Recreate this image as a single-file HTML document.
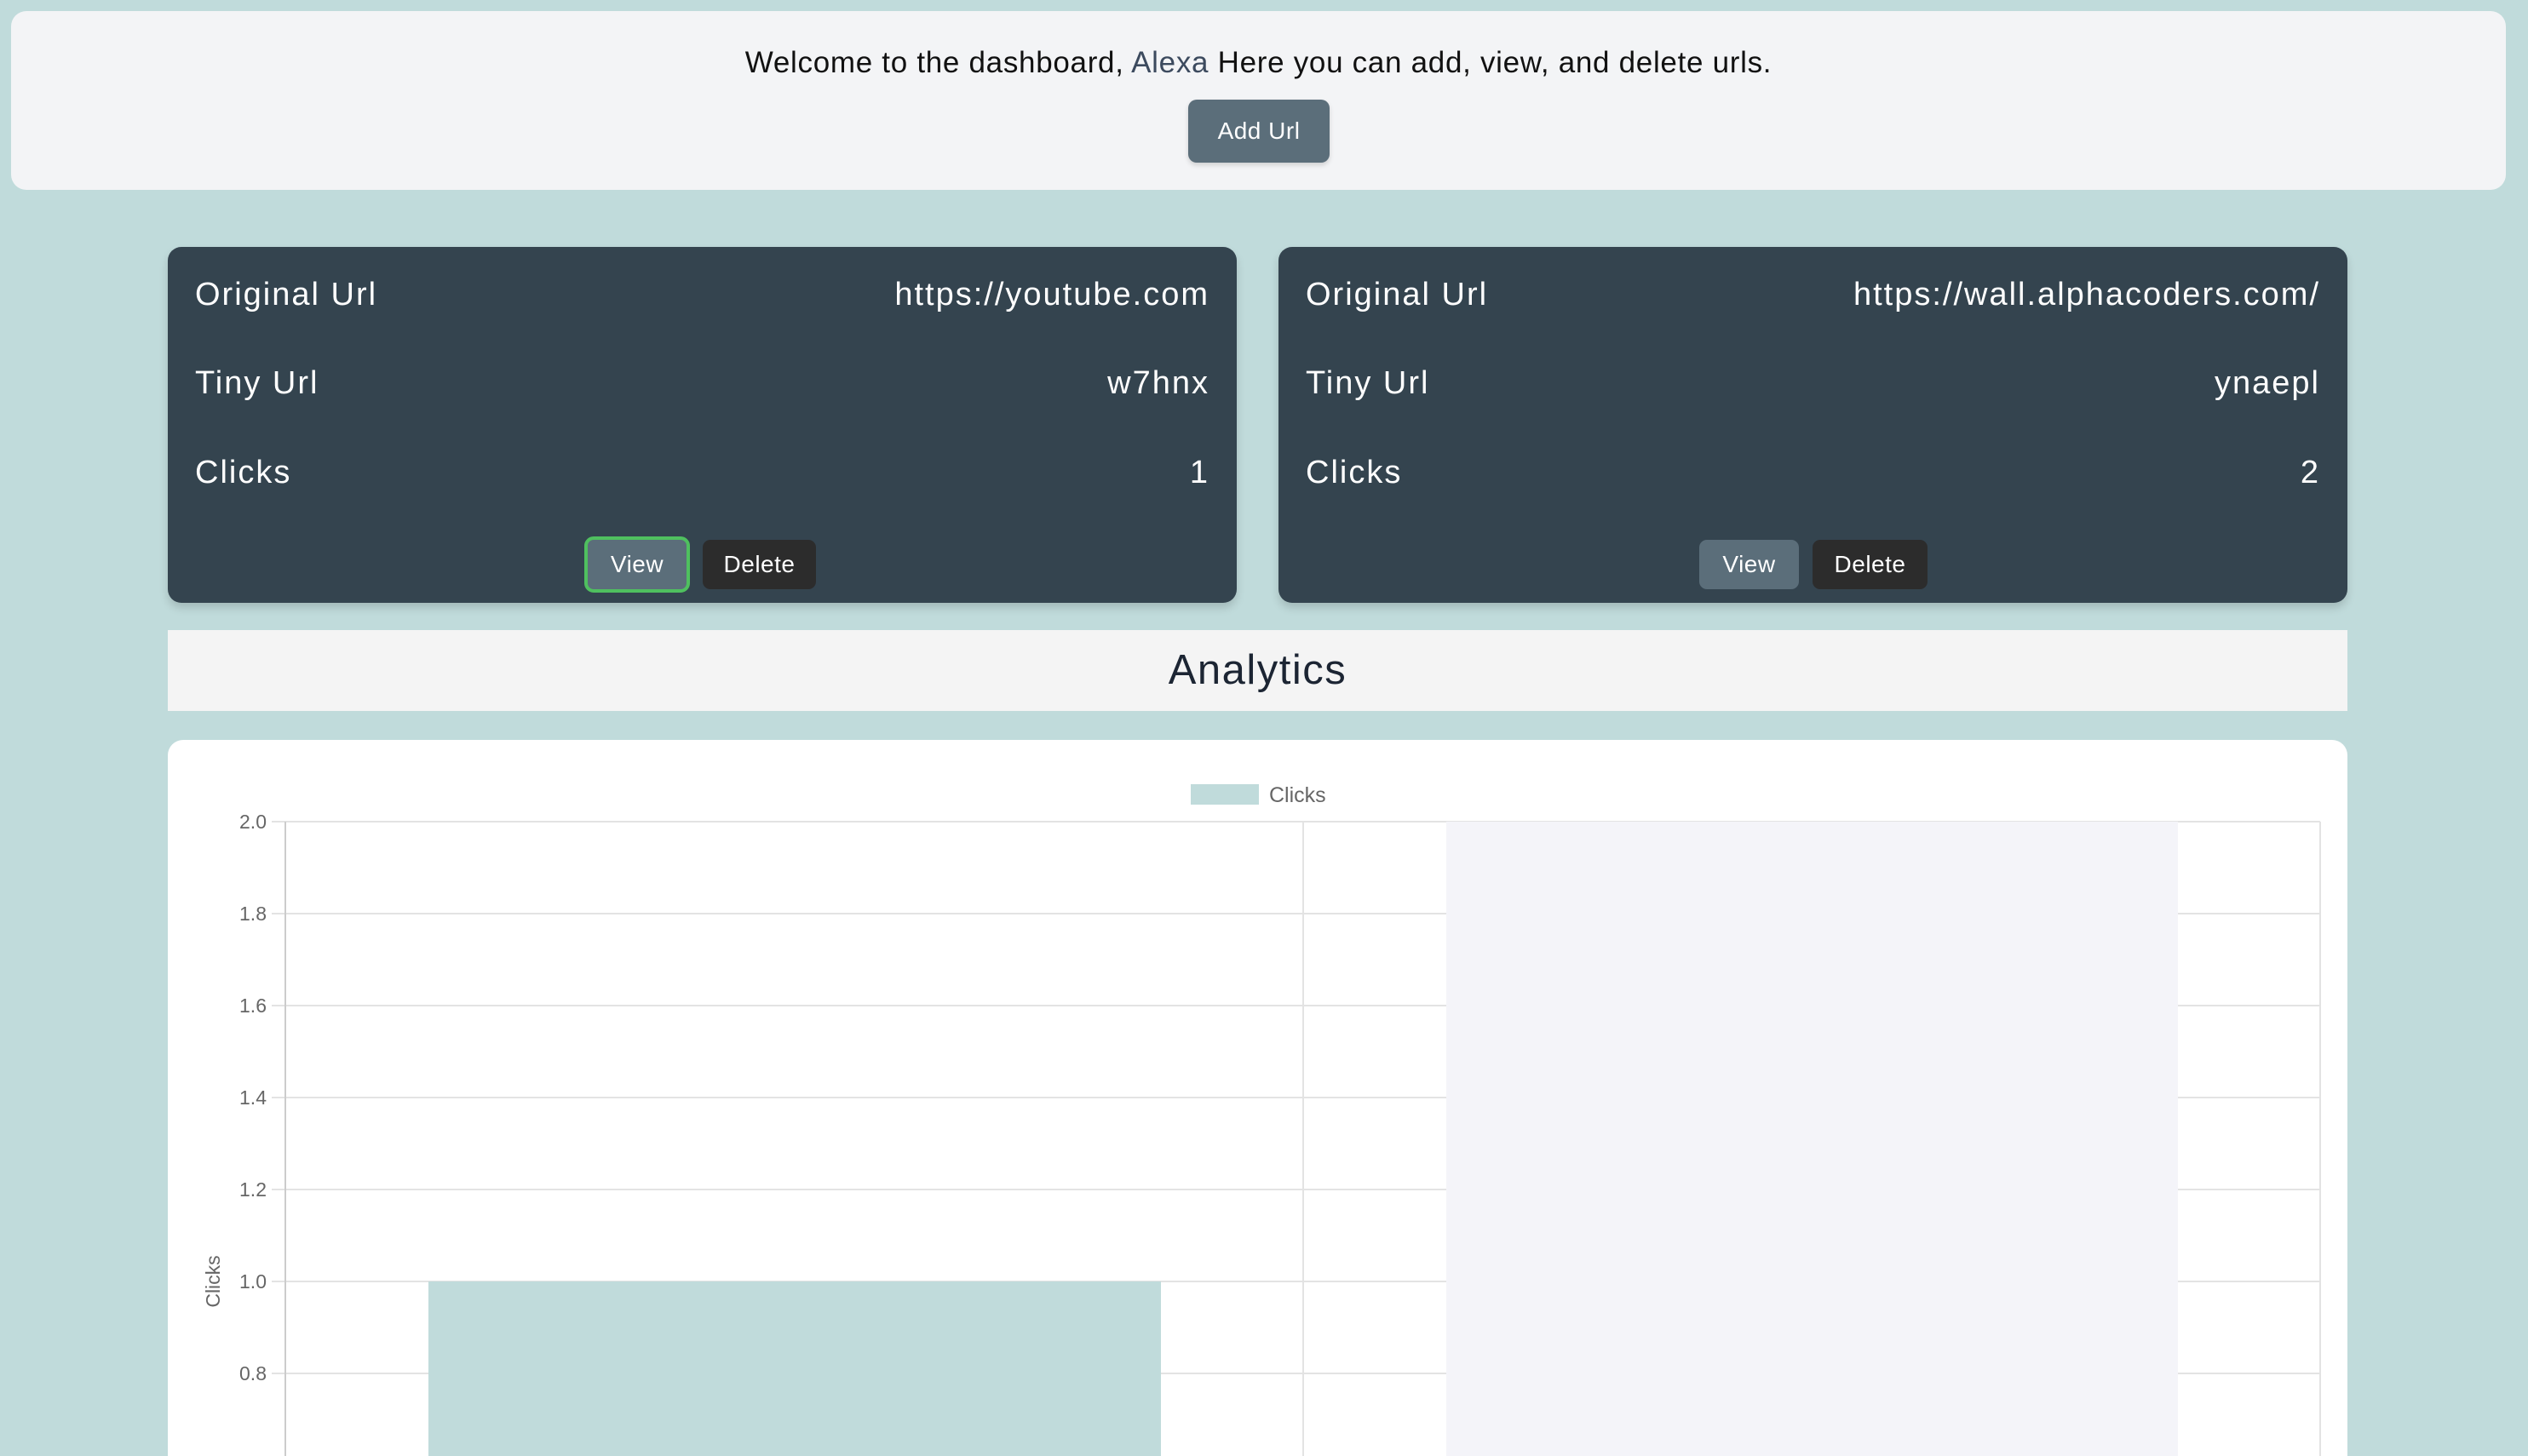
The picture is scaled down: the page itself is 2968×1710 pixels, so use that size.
<!DOCTYPE html>
<html><head><meta charset="utf-8">
<style>
*{margin:0;padding:0;box-sizing:border-box}
html,body{width:2968px;height:1710px;overflow:hidden;background:#c0dbdb;font-family:"Liberation Sans",sans-serif;position:relative}
.top{position:absolute;left:13px;top:13px;width:2929px;height:210px;background:#f3f4f6;border-radius:18px;text-align:center}
.top p{position:absolute;top:41px;left:0;right:0;font-size:35px;letter-spacing:0.7px;color:#111}
.top p span{color:#3c4a5e}
.add{position:absolute;left:1382px;top:104px;width:166px;height:74px;background:#5b6e7a;color:#fff;border-radius:10px;font-size:28px;letter-spacing:0.5px;line-height:74px;box-shadow:0 3px 6px rgba(0,0,0,.15)}
.card{position:absolute;top:290px;width:1255px;height:418px;background:#34444f;border-radius:16px;color:#fff;box-shadow:0 6px 10px rgba(0,0,0,.15)}
.row{position:absolute;left:32px;right:32px;font-size:38px;letter-spacing:2px;display:flex;justify-content:space-between;height:46px;line-height:46px}
.btn{position:absolute;top:344px;height:58px;line-height:58px;font-size:28px;letter-spacing:0.5px;color:#fff;text-align:center;border-radius:9px}
.v{background:#5b6e7a}.d{background:#2c2c2c}
.ana{position:absolute;left:197px;top:740px;width:2559px;height:95px;background:#f4f4f4;text-align:center;font-size:49px;letter-spacing:1.5px;line-height:95px;color:#1c2533;font-weight:300}
.chart{position:absolute;left:197px;top:869px;width:2559px;height:841px;background:#fff;border-radius:18px 18px 0 0}
</style></head><body>
<div class="top"><p>Welcome to the dashboard, <span>Alexa</span> Here you can add, view, and delete urls.</p><div class="add">Add Url</div></div>

<div class="card" style="left:197px">
<div class="row" style="top:33px"><span>Original Url</span><span>https://youtube.com</span></div>
<div class="row" style="top:137px"><span>Tiny Url</span><span>w7hnx</span></div>
<div class="row" style="top:242px"><span>Clicks</span><span>1</span></div>
<div class="btn v" style="left:489px;width:124px;height:66px;top:340px;line-height:58px;border:4px solid #4fc05f;border-radius:11px">View</div>
<div class="btn d" style="left:628px;width:133px">Delete</div>
</div>
<div class="card" style="left:1501px">
<div class="row" style="top:33px"><span>Original Url</span><span>https://wall.alphacoders.com/</span></div>
<div class="row" style="top:137px"><span>Tiny Url</span><span>ynaepl</span></div>
<div class="row" style="top:242px"><span>Clicks</span><span>2</span></div>
<div class="btn v" style="left:494px;width:117px">View</div>
<div class="btn d" style="left:627px;width:135px">Delete</div>
</div>

<div class="ana">Analytics</div>
<div class="chart"></div>
<svg style="position:absolute;left:0;top:0" width="2968" height="1710">
<g font-family="Liberation Sans, sans-serif" fill="#666">
<rect x="1398" y="921" width="80" height="24" fill="#c0dbdb"/>
<text x="1490" y="942" font-size="25">Clicks</text>
<g stroke="#e3e3e3" stroke-width="2">
<line x1="319" y1="965" x2="2724" y2="965"/>
<line x1="319" y1="1073" x2="2724" y2="1073"/>
<line x1="319" y1="1181" x2="2724" y2="1181"/>
<line x1="319" y1="1289" x2="2724" y2="1289"/>
<line x1="319" y1="1397" x2="2724" y2="1397"/>
<line x1="319" y1="1505" x2="2724" y2="1505"/>
<line x1="319" y1="1613" x2="2724" y2="1613"/>
<line x1="1530" y1="965" x2="1530" y2="1710"/>
<line x1="2724" y1="965" x2="2724" y2="1710"/>
</g>
<line x1="335" y1="965" x2="335" y2="1710" stroke="#ccc" stroke-width="2"/>
<rect x="503" y="1505" width="860" height="205" fill="#c0dbdb"/>
<rect x="1698" y="965" width="859" height="745" fill="#f4f4f9"/>
<g font-size="23" text-anchor="end">
<text x="313" y="973">2.0</text>
<text x="313" y="1081">1.8</text>
<text x="313" y="1189">1.6</text>
<text x="313" y="1297">1.4</text>
<text x="313" y="1405">1.2</text>
<text x="313" y="1513">1.0</text>
<text x="313" y="1621">0.8</text>
</g>
<text x="0" y="0" font-size="23" text-anchor="middle" transform="translate(258,1505) rotate(-90)">Clicks</text>
</g>
</svg>
</body></html>
